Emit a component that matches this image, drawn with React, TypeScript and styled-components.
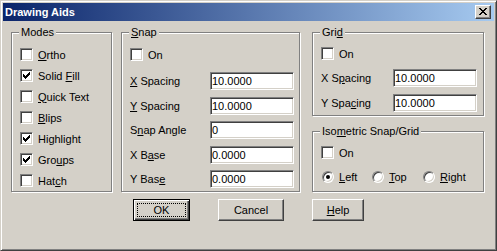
import React from "react";
import styled, { createGlobalStyle } from "styled-components";

const GlobalStyle = createGlobalStyle`
  html, body {
    margin: 0;
    padding: 0;
    background: #d4d0c8;
  }
  body {
    font-family: "Liberation Sans", Arial, sans-serif;
    font-size: 11px;
    color: #000;
  }
`;

const Window = styled.div`
  width: 497px;
  height: 251px;
  box-sizing: border-box;
  padding: 2px;
  background: #d4d0c8;
  border: 1px solid;
  border-color: #d4d0c8 #404040 #404040 #d4d0c8;
  box-shadow: inset 1px 1px #fff, inset -1px -1px #808080;
  display: flex;
  flex-direction: column;
`;

const TitleBar = styled.div`
  flex: none;
  height: 18px;
  display: flex;
  align-items: center;
  padding: 0 3px 0 2px;
  background: linear-gradient(to right, #0a246a, #a6caf0);
  color: #fff;
  font-weight: bold;
  font-size: 11px;
`;

const CloseButton = styled.div`
  margin-left: auto;
  width: 16px;
  height: 14px;
  box-sizing: border-box;
  background: #d4d0c8;
  border: 1px solid;
  border-color: #fff #404040 #404040 #fff;
  box-shadow: inset -1px -1px #808080;
  display: flex;
  align-items: flex-start;
  padding: 2px 0 0 3px;
`;

const Body = styled.div`
  padding: 11px 0 0 8px;
`;

const GroupRow = styled.div`
  display: flex;
  align-items: flex-start;
`;

const Column = styled.div`
  display: flex;
  flex-direction: column;
  gap: 15px;
`;

const Group = styled.div<{ $w: number; $h: number; $gap?: number }>`
  position: relative;
  box-sizing: border-box;
  width: ${(p) => p.$w}px;
  height: ${(p) => p.$h}px;
  margin-right: ${(p) => p.$gap ?? 0}px;
  border: 1px solid #808080;
  box-shadow: inset 1px 1px #fff, 1px 1px #fff;
`;

const Legend = styled.span`
  position: absolute;
  top: -7px;
  left: 7px;
  padding: 0 2px;
  line-height: 13px;
  background: #d4d0c8;
  white-space: nowrap;
`;

const GroupBody = styled.div<{ $top: number }>`
  display: flex;
  flex-direction: column;
  padding: ${(p) => p.$top}px 0 0 8px;
`;

const CheckList = styled.div`
  display: flex;
  flex-direction: column;
  gap: 8px;
`;

const CheckRow = styled.label`
  display: flex;
  align-items: center;
  gap: 5px;
  height: 13px;
  white-space: nowrap;
`;

const Box = styled.span`
  flex: none;
  width: 13px;
  height: 13px;
  box-sizing: border-box;
  background: #fff;
  border: 1px solid;
  border-color: #808080 #fff #fff #808080;
  box-shadow: inset 1px 1px #404040, inset -1px -1px #d4d0c8;
  display: flex;
  align-items: center;
  justify-content: center;
`;

const Fields = styled.div<{ $label: number; $top: number; $gap: number }>`
  display: grid;
  grid-template-columns: ${(p) => p.$label}px 84px;
  row-gap: ${(p) => p.$gap}px;
  align-items: center;
  margin-top: ${(p) => p.$top}px;
  white-space: nowrap;
`;

const Field = styled.input`
  box-sizing: border-box;
  width: 84px;
  height: 18px;
  margin: 0;
  padding: 0 0 0 1px;
  font: inherit;
  color: #000;
  background: #fff;
  border: 1px solid;
  border-color: #808080 #fff #fff #808080;
  box-shadow: inset 1px 1px #404040, inset -1px -1px #d4d0c8;
  outline: none;
`;

const RadioRow = styled.div`
  display: grid;
  grid-template-columns: 50px 51px auto;
  margin-top: 12px;
  padding-left: 1px;
`;

const RadioItem = styled.label`
  display: flex;
  align-items: center;
  gap: 5px;
  height: 12px;
`;

const Radio = styled.span<{ $on?: boolean }>`
  flex: none;
  width: 12px;
  height: 12px;
  box-sizing: border-box;
  border-radius: 50%;
  background: #fff;
  border: 1px solid;
  border-color: #808080 #fff #fff #808080;
  box-shadow: inset 1px 1px #404040, inset -1px -1px #d4d0c8;
  display: flex;
  align-items: center;
  justify-content: center;

  &::after {
    content: "";
    width: 4px;
    height: 4px;
    border-radius: 50%;
    background: ${(p) => (p.$on ? "#000" : "transparent")};
  }
`;

const Key = styled.span`
  text-decoration: underline;
  text-underline-offset: 1px;
`;

const ButtonRow = styled.div`
  display: flex;
  gap: 28px;
  margin-top: 7px;
  padding-left: 122px;
`;

const Button = styled.div<{ $w: number; $default?: boolean }>`
  position: relative;
  width: ${(p) => p.$w}px;
  height: 22px;
  box-sizing: border-box;
  background: #d4d0c8;
  display: flex;
  align-items: center;
  justify-content: center;
  border: 1px solid;
  border-color: ${(p) =>
    p.$default ? "#000" : "#fff #404040 #404040 #fff"};
  box-shadow: ${(p) =>
    p.$default
      ? "inset 1px 1px #fff, inset -1px -1px #404040, inset -2px -2px #808080"
      : "inset -1px -1px #808080"};

  &::after {
    content: "";
    display: ${(p) => (p.$default ? "block" : "none")};
    position: absolute;
    inset: 3px;
    border: 1px dotted #000;
  }
`;

const CheckMark = () => (
  <svg width="7" height="7" viewBox="0 0 7 7" shapeRendering="crispEdges">
    <path
      fill="#000"
      d="M6 0h1v1h-1z M5 1h2v1h-2z M0 2h1v1h-1z M4 2h3v1h-3z M0 3h2v1h-2z M3 3h3v1h-3z M0 4h5v1h-5z M1 5h3v1h-3z M2 6h1v1h-1z"
    />
  </svg>
);

const CloseGlyph = () => (
  <svg width="8" height="7" viewBox="0 0 8 7" shapeRendering="crispEdges">
    <path
      fill="#000"
      d="M0 0h2v1h-2z M6 0h2v1h-2z M1 1h2v1h-2z M5 1h2v1h-2z M2 2h4v1h-4z M3 3h2v1h-2z M2 4h4v1h-4z M1 5h2v1h-2z M5 5h2v1h-2z M0 6h2v1h-2z M6 6h2v1h-2z"
    />
  </svg>
);

function Check({ on, children }: { on?: boolean; children: React.ReactNode }) {
  return (
    <CheckRow>
      <Box>{on && <CheckMark />}</Box>
      <span>{children}</span>
    </CheckRow>
  );
}

const modes = [
  { pre: "", key: "O", post: "rtho", on: false },
  { pre: "Solid ", key: "F", post: "ill", on: true },
  { pre: "", key: "Q", post: "uick Text", on: false },
  { pre: "", key: "B", post: "lips", on: false },
  { pre: "Highlight", key: "", post: "", on: true },
  { pre: "Gro", key: "u", post: "ps", on: true },
  { pre: "Hat", key: "c", post: "h", on: false },
];

const snapFields = [
  { pre: "", key: "X", post: " Spacing", value: "10.0000" },
  { pre: "", key: "Y", post: " Spacing", value: "10.0000" },
  { pre: "S", key: "n", post: "ap Angle", value: "0" },
  { pre: "X B", key: "a", post: "se", value: "0.0000" },
  { pre: "Y Bas", key: "e", post: "", value: "0.0000" },
];

const gridFields = [
  { pre: "X S", key: "p", post: "acing", value: "10.0000" },
  { pre: "Y Spa", key: "c", post: "ing", value: "10.0000" },
];

export default function App() {
  return (
    <>
      <GlobalStyle />
      <Window>
        <TitleBar>
          Drawing Aids
          <CloseButton>
            <CloseGlyph />
          </CloseButton>
        </TitleBar>
        <Body>
          <GroupRow>
            <Group $w={101} $h={160} $gap={9}>
              <Legend>Modes</Legend>
              <GroupBody $top={15}>
                <CheckList>
                  {modes.map((m) => (
                    <Check key={m.pre + m.key + m.post} on={m.on}>
                      {m.pre}
                      {m.key && <Key>{m.key}</Key>}
                      {m.post}
                    </Check>
                  ))}
                </CheckList>
              </GroupBody>
            </Group>

            <Group $w={179} $h={160} $gap={12}>
              <Legend>
                <Key>S</Key>nap
              </Legend>
              <GroupBody $top={15}>
                <Check>On</Check>
                <Fields $label={80} $top={11} $gap={6.5}>
                  {snapFields.map((f) => (
                    <React.Fragment key={f.pre + f.key + f.post}>
                      <span>
                        {f.pre}
                        <Key>{f.key}</Key>
                        {f.post}
                      </span>
                      <Field readOnly defaultValue={f.value} />
                    </React.Fragment>
                  ))}
                </Fields>
              </GroupBody>
            </Group>

            <Column>
              <Group $w={172} $h={84}>
                <Legend>
                  Gri<Key>d</Key>
                </Legend>
                <GroupBody $top={14}>
                  <Check>On</Check>
                  <Fields $label={72} $top={9} $gap={7}>
                    {gridFields.map((f) => (
                      <React.Fragment key={f.pre + f.key + f.post}>
                        <span>
                          {f.pre}
                          <Key>{f.key}</Key>
                          {f.post}
                        </span>
                        <Field readOnly defaultValue={f.value} />
                      </React.Fragment>
                    ))}
                  </Fields>
                </GroupBody>
              </Group>

              <Group $w={172} $h={61}>
                <Legend>
                  Iso<Key>m</Key>etric Snap/Grid
                </Legend>
                <GroupBody $top={14}>
                  <Check>On</Check>
                  <RadioRow>
                    <RadioItem>
                      <Radio $on />
                      <span>
                        <Key>L</Key>eft
                      </span>
                    </RadioItem>
                    <RadioItem>
                      <Radio />
                      <span>
                        <Key>T</Key>op
                      </span>
                    </RadioItem>
                    <RadioItem>
                      <Radio />
                      <span>
                        <Key>R</Key>ight
                      </span>
                    </RadioItem>
                  </RadioRow>
                </GroupBody>
              </Group>
            </Column>
          </GroupRow>

          <ButtonRow>
            <Button $w={57} $default>
              OK
            </Button>
            <Button $w={66}>Cancel</Button>
            <Button $w={52}>
              <span>
                <Key>H</Key>elp
              </span>
            </Button>
          </ButtonRow>
        </Body>
      </Window>
    </>
  );
}
